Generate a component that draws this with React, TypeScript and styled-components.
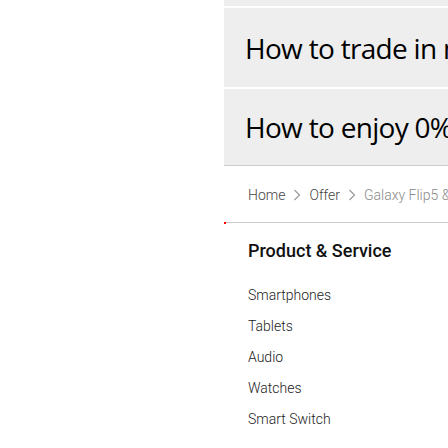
import React from "react";
import styled, { createGlobalStyle } from "styled-components";

const Global = createGlobalStyle`
  html, body {
    margin: 0;
    padding: 0;
    background: #ffffff;
    overflow: hidden;
  }
  body {
    font-family: "Roboto", "Liberation Sans", sans-serif;
  }
`;

const Page = styled.div`
  display: flex;
  flex-direction: row;
  width: 448px;
  height: 448px;
  overflow: hidden;
`;

const Aside = styled.div`
  flex: 0 0 224px;
`;

const Main = styled.main`
  flex: 0 0 640px;
  display: flex;
  flex-direction: column;
`;

const FaqList = styled.div`
  display: flex;
  flex-direction: column;
  gap: 2px;
`;

const FaqRow = styled.div<{ $h: number; $last?: boolean }>`
  height: ${(p) => p.$h}px;
  background: #eeeeee;
  display: flex;
  align-items: center;
  padding-left: 21px;
  border-bottom: ${(p) => (p.$last ? "1px solid #cccccc" : "none")};
`;

const FaqTitle = styled.h3`
  margin: 0;
  font-family: "Open Sans", "Noto Sans", sans-serif;
  font-weight: 500;
  font-size: 28px;
  letter-spacing: -0.7px;
  color: #000000;
  white-space: nowrap;
`;

const Breadcrumb = styled.nav`
  display: flex;
  align-items: center;
  gap: 8px;
  margin: 19px 0 0 24px;
  height: 20px;
  font-size: 14px;
  font-weight: 300;
  white-space: nowrap;
`;

const Crumb = styled.span<{ $current?: boolean }>`
  color: ${(p) => (p.$current ? "#8a8a8a" : "#444444")};
`;

const Chevron = () => (
  <svg width="8" height="12" viewBox="0 0 8 12" fill="none">
    <path d="M1.5 1 L6.5 6 L1.5 11" stroke="#9a9a9a" strokeWidth="1.2" />
  </svg>
);

const Divider = styled.div`
  position: relative;
  margin-top: 17px;
  height: 1px;
  background: #cccccc;
`;

const Marker = styled.span`
  position: absolute;
  left: 0;
  top: 0;
  width: 2px;
  height: 2px;
  background: #ff0000;
`;

const Section = styled.section`
  display: flex;
  flex-direction: column;
  padding-left: 24px;
  margin-top: 16px;
`;

const SectionTitle = styled.h4`
  margin: 0;
  font-family: "Roboto", sans-serif;
  font-size: 18px;
  line-height: 24px;
  font-weight: 500;
  color: #111111;
`;

const Links = styled.ul`
  list-style: none;
  margin: 17px 0 0;
  padding: 0;
`;

const LinkItem = styled.li`
  font-size: 14px;
  line-height: 31px;
  font-weight: 300;
  color: #222222;
`;

const items = ["Smartphones", "Tablets", "Audio", "Watches", "Smart Switch"];

export default function App() {
  return (
    <>
      <Global />
      <Page>
        <Aside />
        <Main>
          <FaqList>
            <FaqRow $h={6} />
            <FaqRow $h={79}>
              <FaqTitle>How to trade in my old device?</FaqTitle>
            </FaqRow>
            <FaqRow $h={76} $last>
              <FaqTitle>How to enjoy 0% interest instalment?</FaqTitle>
            </FaqRow>
          </FaqList>
          <Breadcrumb>
            <Crumb>Home</Crumb>
            <Chevron />
            <Crumb>Offer</Crumb>
            <Chevron />
            <Crumb $current>Galaxy Flip5 &amp; Fold5</Crumb>
          </Breadcrumb>
          <Divider>
            <Marker />
          </Divider>
          <Section>
            <SectionTitle>Product &amp; Service</SectionTitle>
            <Links>
              {items.map((i) => (
                <LinkItem key={i}>{i}</LinkItem>
              ))}
            </Links>
          </Section>
        </Main>
      </Page>
    </>
  );
}
